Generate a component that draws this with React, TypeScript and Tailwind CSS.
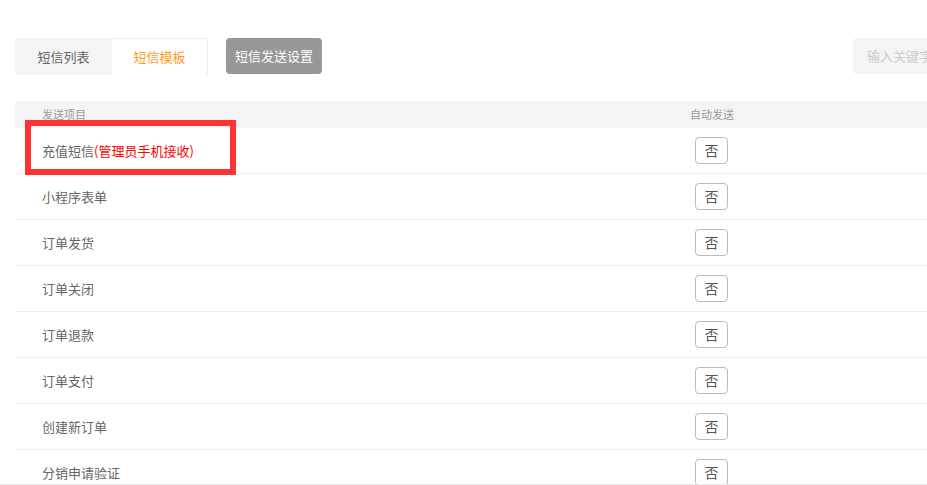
const ROWS = [
  '充值短信',
  '小程序表单',
  '订单发货',
  '订单关闭',
  '订单退款',
  '订单支付',
  '创建新订单',
  '分销申请验证',
];

const FONT = { fontFamily: '"Microsoft YaHei", "Noto Sans CJK SC", "Noto Sans", sans-serif' };

export default function App() {
  return (
    <div className="relative h-[485px] overflow-hidden border-b border-[#e8e8e8] bg-white" style={FONT}>
      {/* Toolbar */}
      <div className="flex items-start pl-[15px] pt-[38px]">
        <div className="flex h-[37px]">
          <div className="flex w-[97px] items-center justify-center bg-[#f4f4f4] text-[13px] text-[#666]">
            短信列表
          </div>
          <div className="flex w-[96px] items-center justify-center border-r border-t border-[#eee] bg-white text-[13px] text-[#ff9a1f]">
            短信模板
          </div>
        </div>
        <button className="ml-[18px] flex h-[36px] w-[96px] items-center justify-center rounded bg-[#979797] text-[13px] text-white">
          短信发送设置
        </button>
        <div className="ml-auto flex h-[36px] w-[90px] shrink-0 translate-x-[16px] items-center rounded bg-[#f4f4f4] pl-[14px] text-[13px] whitespace-nowrap text-[#ccc]">
          输入关键字
        </div>
      </div>

      {/* Table */}
      <div className="ml-[15px] mt-[26px]">
        <div className="flex h-[27px] items-center rounded-l-[3px] bg-[#f4f4f4] text-[11px] text-[#999]">
          <div className="w-[675px] pl-[27px]">发送项目</div>
          <div>自动发送</div>
        </div>
        {ROWS.map((name, i) => (
          <div key={name} className="flex h-[46px] items-center border-b border-[#eee] text-[13px] text-[#666]">
            <div className="w-[680px] pl-[27px]">
              {name}
              {i === 0 && <span className="text-[#f00]">(管理员手机接收)</span>}
            </div>
            <button className="flex h-[27px] w-[33px] items-center justify-center rounded border border-[#bbb] bg-white text-[14px] text-[#555]">
              否
            </button>
          </div>
        ))}
      </div>

      {/* Annotation box */}
      <div className="pointer-events-none absolute left-[25px] top-[120px] h-[55px] w-[211px] border-[6px] border-[#f33]" />
    </div>
  );
}
